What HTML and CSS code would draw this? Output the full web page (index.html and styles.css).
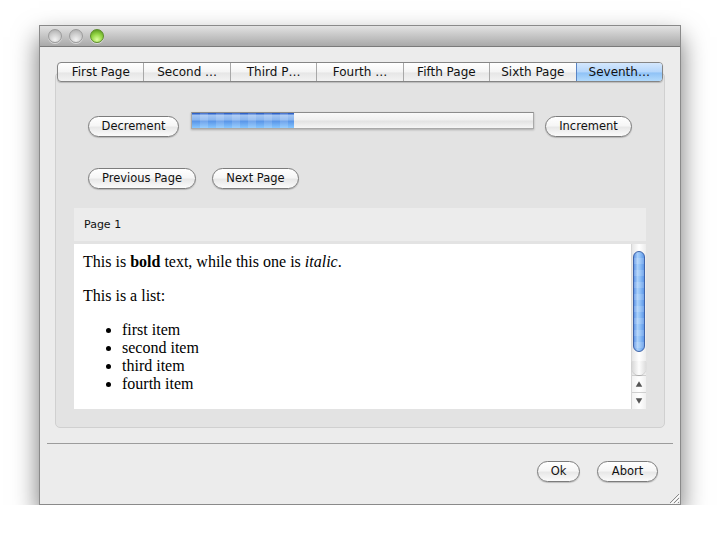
FILE: index.html
```html
<!DOCTYPE html>
<html>
<head>
<meta charset="utf-8">
<link rel="stylesheet" href="styles.css">
</head>
<body>
<div class="window">
  <div class="titlebar">
    <span class="light gray"></span>
    <span class="light gray"></span>
    <span class="light green"></span>
  </div>
  <div class="content">
    <div class="tabs">
      <div class="tab">First Page</div>
      <div class="tab">Second …</div>
      <div class="tab">Third P…</div>
      <div class="tab">Fourth …</div>
      <div class="tab">Fifth Page</div>
      <div class="tab">Sixth Page</div>
      <div class="tab selected">Seventh…</div>
    </div>
    <div class="panel">
      <div class="row row1">
        <button class="btn w-dec">Decrement</button>
        <div class="progress"><div class="fill" style="width:30%"></div></div>
        <button class="btn w-inc">Increment</button>
      </div>
      <div class="row row2">
        <button class="btn w-prev">Previous Page</button>
        <button class="btn w-next">Next Page</button>
      </div>
      <div class="page">
        <div class="page-header">Page 1</div>
        <div class="editor">
          <div class="doc">
            <p>This is <b>bold</b> text, while this one is <i>italic</i>.</p>
            <p>This is a list:</p>
            <ul>
              <li>first item</li>
              <li>second item</li>
              <li>third item</li>
              <li>fourth item</li>
            </ul>
          </div>
          <div class="scrollbar">
            <div class="track">
              <div class="thumb"></div>
              <div class="cap"></div>
            </div>
            <div class="arrow up"><svg width="15" height="16" viewBox="0 0 15 16"><path d="M4 11 L7.5 5 L11 11 Z" fill="#555"/></svg></div>
            <div class="arrow down"><svg width="15" height="16" viewBox="0 0 15 16"><path d="M4 5 L11 5 L7.5 11 Z" fill="#555"/></svg></div>
          </div>
        </div>
      </div>
    </div>
    <div class="separator"></div>
    <div class="footer">
      <button class="btn w-ok">Ok</button>
      <button class="btn w-abort">Abort</button>
    </div>
    <svg class="grip" width="12" height="12" viewBox="0 0 12 12">
      <path d="M11 2 L2 11 M11 6 L6 11 M11 10 L10 11" stroke="#8a8a8a" stroke-width="1" fill="none"/>
      <path d="M12 3 L3 12 M12 7 L7 12" stroke="#fff" stroke-width="1" fill="none"/>
    </svg>
  </div>
</div>
</body>
</html>
```

FILE: styles.css
```css
html, body {
  margin: 0;
  padding: 0;
  background: #ffffff;
}
body {
  padding: 25px 0 0 39px;
  font-family: "DejaVu Sans", "Liberation Sans", sans-serif;
}
.window {
  width: 640px;
  height: 478px;
  border: 1px solid #8a8a8a;
  background: #ececec;
  box-shadow: 0 12px 24px rgba(0,0,0,0.55);
  display: flex;
  flex-direction: column;
}
.titlebar {
  height: 20px;
  border-bottom: 1px solid #7a7a7a;
  background: linear-gradient(#e3e3e3, #cbcbcb 40%, #a9a9a9);
  display: flex;
  align-items: center;
  gap: 7px;
  padding-left: 8px;
}
.light {
  width: 14px;
  height: 14px;
  border-radius: 50%;
  box-sizing: border-box;
}
.light.gray {
  border: 1px solid #9c9c9c;
  background: radial-gradient(circle at 50% 80%, #f2f2f2, #cfcfcf 50%, #a8a8a8);
  box-shadow: 0 1px 0 rgba(255,255,255,0.5);
}
.light.green {
  border: 1px solid #5e8f2a;
  background: radial-gradient(circle at 50% 80%, #dcff9e, #92d443 50%, #4c8816);
  box-shadow: 0 1px 0 rgba(255,255,255,0.5);
}
.content {
  flex: 1;
  padding: 15px 15px 0 15px;
  position: relative;
}
.tabs {
  position: relative;
  z-index: 1;
  display: flex;
  margin: 0 2px;
  height: 20px;
  box-sizing: border-box;
  border: 1px solid #858585;
  border-radius: 4px;
  background: linear-gradient(#ffffff, #f4f4f4 50%, #e6e6e6 55%, #f2f2f2);
  box-shadow: 0 1px 1px rgba(0,0,0,0.18);
  overflow: hidden;
}
.tab {
  flex: 1;
  font-size: 12px;
  line-height: 18px;
  text-align: center;
  color: #111;
  white-space: nowrap;
  border-left: 1px solid #a8a8a8;
}
.tab:first-child { border-left: none; }
.tab.selected {
  background: linear-gradient(#d4e7fd, #b4d6fb 50%, #8fc2f6 55%, #b2dafc);
  border-left-color: #5a84c4;
}
.panel {
  margin-top: -10px;
  height: 356px;
  box-sizing: border-box;
  border: 1px solid #d0d0d0;
  border-radius: 5px;
  background: #e3e3e3;
  padding: 39px 0 0 0;
}
.row {
  display: flex;
  align-items: flex-start;
  padding: 0 32px;
}
.row1 { height: 25px; }
.row2 { margin-top: 31px; gap: 16px; }
.btn {
  font-family: "DejaVu Sans", "Liberation Sans", sans-serif;
  font-size: 11.5px;
  color: #111;
  height: 21px;
  padding: 0;
  margin: 0;
  box-sizing: border-box;
  border: 1px solid #7c7c7c;
  border-radius: 11px;
  background: linear-gradient(#ffffff, #f6f6f6 45%, #e8e8e8 55%, #fbfbfb);
  box-shadow: 0 1px 1px rgba(0,0,0,0.2);
  line-height: 19px;
  text-align: center;
}
.row1 .btn { margin-top: 4px; }
.w-dec { width: 91px; }
.w-inc { width: 87px; margin-left: 11px; }
.w-prev { width: 108px; }
.w-next { width: 87px; }
.w-ok { width: 43px; }
.w-abort { width: 61px; }
.progress {
  flex: 1;
  margin-left: 12px;
  height: 17px;
  box-sizing: border-box;
  border: 1px solid #a9a9a9;
  border-top-color: #8c8c8c;
  background: linear-gradient(#fafafa, #f0f0f0 45%, #e3e3e3 55%, #f6f6f6);
  box-shadow: 0 1px 2px rgba(0,0,0,0.25);
  overflow: hidden;
}
.fill {
  height: 100%;
  background:
    repeating-linear-gradient(90deg, rgba(255,255,255,0) 0 8px, rgba(255,255,255,0.15) 8px 16px),
    linear-gradient(#2f62c8 0, #2f62c8 1px, #a4c6f3 2px, #8ab5ee 45%, #5a96e8 55%, #86c6ff 100%);
}
.page {
  margin: 19px 18px 0 18px;
}
.page-header {
  height: 33px;
  background: #ececec;
  font-size: 11px;
  line-height: 33px;
  padding-left: 10px;
  color: #111;
}
.editor {
  margin-top: 3px;
  height: 165px;
  background: #ffffff;
  display: flex;
}
.doc {
  flex: 1;
  padding: 9px 0 0 9px;
  font-family: "Liberation Serif", "Times New Roman", serif;
  font-size: 16px;
  line-height: 18px;
  color: #000;
  overflow: hidden;
}
.doc p { margin: 0 0 16px 0; }
.doc ul { margin: 0; padding-left: 39px; }
.scrollbar {
  width: 15px;
  box-sizing: border-box;
  border-left: 1px solid #d6d6d6;
  background: #f4f4f4;
  display: flex;
  flex-direction: column;
}
.track {
  flex: 1;
  position: relative;
  background: linear-gradient(90deg, #e6e6e6, #ffffff 50%, #ececec);
}
.thumb {
  position: absolute;
  left: 1px;
  top: 7px;
  width: 12px;
  height: 101px;
  box-sizing: border-box;
  border: 1px solid #3e63a8;
  border-radius: 6px;
  background:
    repeating-linear-gradient(180deg, rgba(255,255,255,0) 0 6px, rgba(255,255,255,0.15) 6px 12px),
    linear-gradient(90deg, #5f95e6, #a9cff9 35%, #8fc0f7 60%, #5f98e8);
}
.cap {
  position: absolute;
  left: 0;
  right: 0;
  bottom: 0;
  height: 14px;
  border-radius: 0 0 7px 7px;
  background: linear-gradient(90deg, #d8d8d8, #fdfdfd 50%, #dcdcdc);
  box-shadow: 0 1px 1px rgba(0,0,0,0.2);
}
.arrow {
  height: 16px;
  border-top: 1px solid #cfcfcf;
  background: linear-gradient(90deg, #f2f2f2, #ffffff 50%, #f0f0f0);
  display: flex;
}
.arrow svg { display: block; }
.separator {
  margin: 15px -8px 0 -8px;
  height: 1px;
  background: #9c9c9c;
}
.footer {
  display: flex;
  justify-content: flex-end;
  gap: 17px;
  margin: 17px 7px 0 0;
}
.grip {
  position: absolute;
  right: 0;
  bottom: 0;
}
```
